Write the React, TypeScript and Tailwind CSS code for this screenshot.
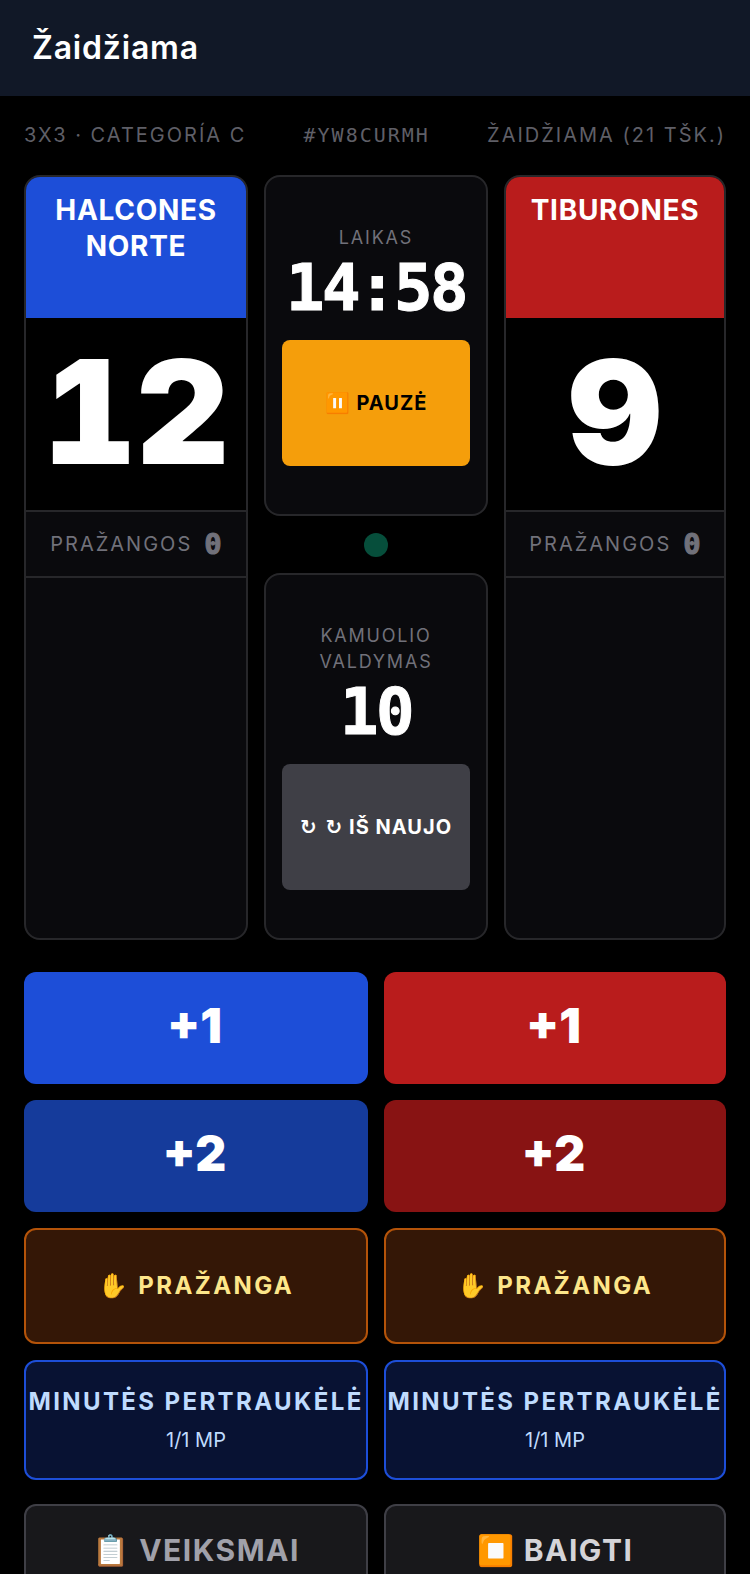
const sans = "font-['Inter','Noto_Sans',sans-serif]";
const mono = "font-['DejaVu_Sans_Mono','Liberation_Mono',monospace]";

function TeamCard({ name, score, headerClass }: { name: string; score: number; headerClass: string }) {
  return (
    <div className="flex flex-col overflow-hidden rounded-2xl border-2 border-[#27272a] bg-[#0a0a0d]">
      <div className={`h-[141px] px-4 pt-[15px] text-center text-[28px] leading-9 font-bold tracking-wide text-white ${headerClass}`}>
        {name}
      </div>
      <div className="flex h-[192px] items-center justify-center bg-black pb-1 text-[144px] leading-none font-black text-white tabular-nums">
        {score}
      </div>
      <div className="flex h-[68px] items-center justify-center gap-3 border-y-2 border-[#27272a]">
        <span className="text-xl tracking-[0.1em] text-[#71717a]">PRAŽANGOS</span>
        <span className={`${mono} text-[29px] leading-none font-bold text-[#71717a] [-webkit-text-stroke:1px_#71717a]`}>0</span>
      </div>
    </div>
  );
}

function ClockCard({ label, value, button, buttonClass }: { label: string; value: string; button: React.ReactNode; buttonClass: string }) {
  return (
    <div className="rounded-2xl border-2 border-[#27272a] bg-[#0a0a0d] px-4 py-12 text-center">
      <div className="text-lg leading-[26px] tracking-[0.1em] text-[#71717a]">{label}</div>
      <div className={`${mono} mt-[5px] mb-[19px] text-[64px] leading-[65px] font-bold tracking-[-0.04em] text-white [-webkit-text-stroke:1px_white]`}>{value}</div>
      <button className={`flex h-[126px] w-full items-center justify-center rounded-lg text-xl font-bold tracking-[0.05em] ${buttonClass}`}>
        {button}
      </button>
    </div>
  );
}

function ScoreButton({ label, className }: { label: string; className: string }) {
  return (
    <button className={`h-[112px] rounded-xl pr-[3px] pb-1 text-5xl font-black text-white ${className}`}>{label}</button>
  );
}

function FoulButton() {
  return (
    <button className="h-[116px] rounded-xl border-2 border-[#b45309] bg-[#341706] text-2xl font-bold tracking-[0.1em] text-[#fde68a]">
      ✋ PRAŽANGA
    </button>
  );
}

function TimeoutButton() {
  return (
    <button className="flex h-[120px] flex-col items-center justify-center rounded-xl border-2 border-[#1d4ed8] bg-[#081233] text-[#bfdbfe]">
      <span className="text-2xl leading-8 font-bold tracking-[0.1em] whitespace-nowrap">MINUTĖS PERTRAUKĖLĖ</span>
      <span className="mt-2 text-xl leading-7">1/1 MP</span>
    </button>
  );
}

export default function App() {
  return (
    <div className={`${sans} h-[1574px] overflow-hidden bg-black`}>
      <header className="flex h-24 items-center bg-[#111827] px-8 text-[32px] font-semibold tracking-wide text-white">Žaidžiama</header>
      <main className="px-6 pt-6">
        <div className="flex items-center justify-between text-xl leading-[30px] tracking-[0.1em] text-[#5f5f67]">
          <span>3X3 · CATEGORÍA C</span>
          <span className={mono}>#YW8CURMH</span>
          <span>ŽAIDŽIAMA (21 TŠK.)</span>
        </div>

        <div className="mt-[25px] grid grid-cols-[224px_224px_222px] gap-4">
          <TeamCard name="HALCONES NORTE" score={12} headerClass="bg-[#1d4ed8]" />
          <div className="flex flex-col">
            <ClockCard label="LAIKAS" value="14:58" button="⏸️ PAUZĖ" buttonClass="bg-[#f59e0b] text-black" />
            <div className="flex h-[57px] items-center justify-center">
              <div className="size-6 rounded-full bg-[#064e3b]" />
            </div>
            <ClockCard
              label="KAMUOLIO VALDYMAS"
              value="10"
              button={<span><span className="font-['DejaVu_Sans']">↻ ↻</span> IŠ NAUJO</span>}
              buttonClass="bg-[#3f3f46] text-white"
            />
          </div>
          <TeamCard name="TIBURONES" score={9} headerClass="bg-[#b91c1c]" />
        </div>

        <div className="mt-8 grid grid-cols-[344px_342px] gap-4">
          <ScoreButton label="+1" className="bg-[#1d4ed8]" />
          <ScoreButton label="+1" className="bg-[#b91c1c]" />
          <ScoreButton label="+2" className="bg-[#153b9b]" />
          <ScoreButton label="+2" className="bg-[#881313]" />
          <FoulButton />
          <FoulButton />
          <TimeoutButton />
          <TimeoutButton />
        </div>

        <div className="mt-6 grid grid-cols-[344px_342px] gap-4">
          <button className="h-[92px] rounded-xl border-2 border-[#3f3f46] bg-[#18181b] text-3xl font-bold tracking-[0.05em] text-[#a1a1aa]">
            📋 VEIKSMAI
          </button>
          <button className="h-[92px] rounded-xl border-2 border-[#3f3f46] bg-[#18181b] text-3xl font-bold tracking-[0.05em] text-[#d4d4d8]">
            ⏹️ BAIGTI
          </button>
        </div>
      </main>
    </div>
  );
}
